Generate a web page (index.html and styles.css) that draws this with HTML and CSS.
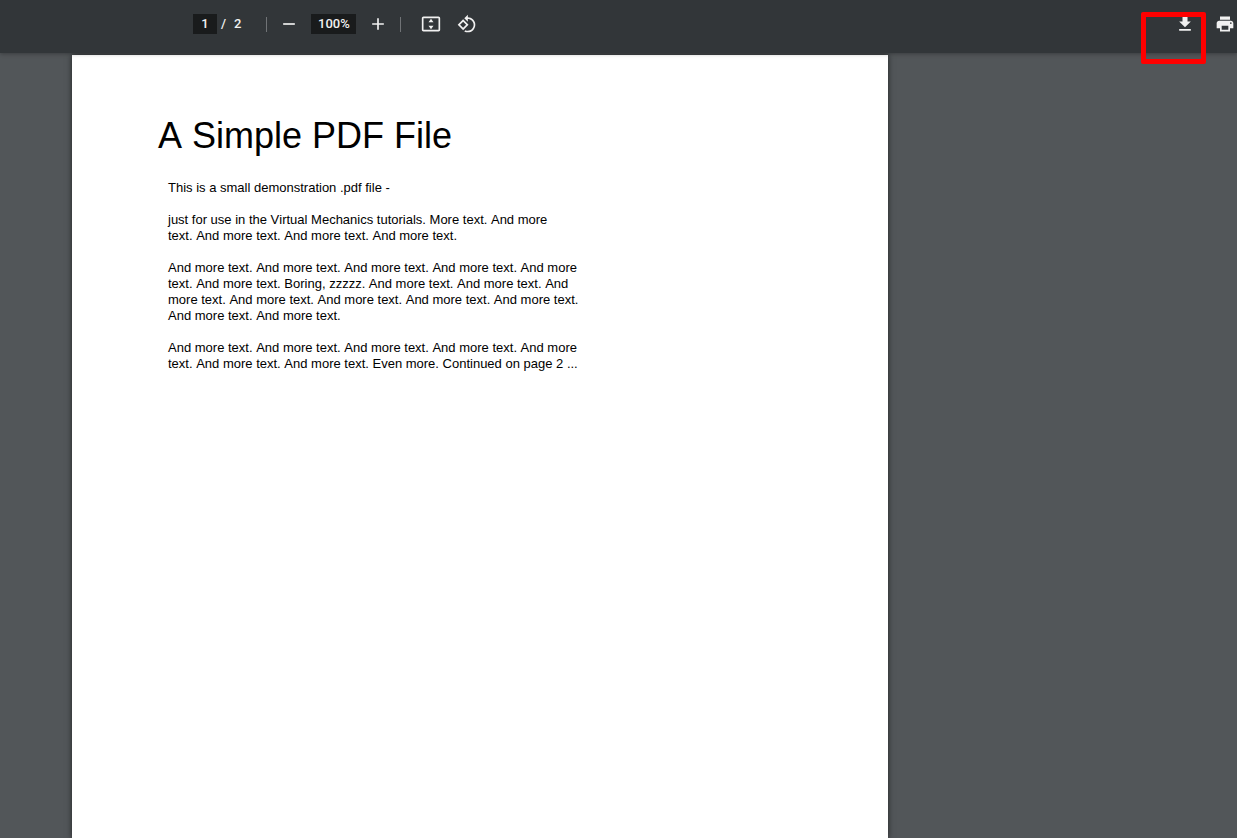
FILE: index.html
```html
<!DOCTYPE html>
<html lang="en">
<head>
<meta charset="utf-8">
<title>A Simple PDF File</title>
<link rel="stylesheet" href="styles.css">
</head>
<body>
<header class="toolbar">
  <div class="controls">
    <div class="pages">
      <input class="field page-number" type="text" value="1" aria-label="Page number">
      <span>/</span>
      <span class="page-count">2</span>
    </div>
    <span class="divider"></span>
    <div class="zoom">
      <button class="icon-button" type="button" aria-label="Zoom out">
        <svg viewBox="0 0 24 24"><path d="M19 13H5v-2h14z"/></svg>
      </button>
      <input class="field zoom-level" type="text" value="100%" aria-label="Zoom level">
      <button class="icon-button" type="button" aria-label="Zoom in">
        <svg viewBox="0 0 24 24"><path d="M19 13h-6v6h-2v-6H5v-2h6V5h2v6h6z"/></svg>
      </button>
    </div>
    <span class="divider"></span>
    <div class="view">
      <button class="icon-button" type="button" aria-label="Fit to page">
        <svg viewBox="0 0 24 24"><path d="M21 3H3c-1.100 0-2 .9-2 2v14c0 1.100.9 2 2 2h18c1.100 0 2-.9 2-2V5c0-1.100-.9-2-2-2zm0 16H3V5h18zM12 5.800 9 10h6zm0 12.400L15 14H9z"/></svg>
      </button>
      <button class="icon-button" type="button" aria-label="Rotate counterclockwise">
        <svg viewBox="0 0 24 24"><path d="M7.340 6.410.86 12.900l6.490 6.480 6.490-6.480-6.500-6.490zM3.690 12.900l3.660-3.660L11 12.900l-3.660 3.660-3.650-3.660zm15.670-6.260C17.610 4.880 15.300 4 13 4V.76L8.760 5 13 9.240V6c1.790 0 3.580.68 4.950 2.050 2.730 2.730 2.730 7.170 0 9.900C16.580 19.320 14.790 20 13 20c-.97 0-1.940-.21-2.840-.61l-1.490 1.490C10.020 21.620 11.510 22 13 22c2.300 0 4.610-.88 6.360-2.640 3.520-3.510 3.520-9.210 0-12.720z"/></svg>
      </button>
    </div>
  </div>
  <div class="actions">
    <div class="highlighted">
      <button class="icon-button" type="button" aria-label="Download">
        <svg viewBox="0 0 24 24"><path d="M19 9h-4V3H9v6H5l7 7zM5 18v2h14v-2z"/></svg>
      </button>
      <span class="highlight"></span>
    </div>
    <button class="icon-button" type="button" aria-label="Print">
      <svg viewBox="0 0 24 24"><path d="M19 8H5c-1.660 0-3 1.340-3 3v6h4v4h12v-4h4v-6c0-1.660-1.340-3-3-3zm-3 11H8v-5h8zm3-7c-.55 0-1-.45-1-1s.45-1 1-1 1 .45 1 1-.45 1-1 1zM18 3H6v4h12z"/></svg>
    </button>
  </div>
</header>
<main class="viewer">
  <article class="sheet">
    <h1 class="title">A Simple PDF File</h1>
    <div class="text">
      <p>This is a small demonstration .pdf file -</p>
      <p>just for use in the Virtual Mechanics tutorials. More text. And more<br>text. And more text. And more text. And more text.</p>
      <p>And more text. And more text. And more text. And more text. And more<br>text. And more text. Boring, zzzzz. And more text. And more text. And<br>more text. And more text. And more text. And more text. And more text.<br>And more text. And more text.</p>
      <p>And more text. And more text. And more text. And more text. And more<br>text. And more text. And more text. Even more. Continued on page 2 ...</p>
    </div>
  </article>
</main>
</body>
</html>
```
FILE: styles.css
```css
* {
  box-sizing: border-box;
}

body {
  display: flex;
  flex-direction: column;
  min-height: 100vh;
  margin: 0;
  background: #525659;
  font-family: "Liberation Sans", Arial, sans-serif;
}

.toolbar {
  position: relative;
  z-index: 1;
  display: flex;
  justify-content: space-between;
  padding: 14px 2px 19px 193px;
  background: #323639;
  box-shadow: 0 1px 4px rgba(0, 0, 0, 0.3);
  color: #f1f1f1;
  font: 500 13px/20px Roboto, sans-serif;
}

.controls,
.pages,
.zoom,
.view,
.actions {
  display: flex;
  align-items: center;
}

.pages {
  gap: 4px;
}

.page-count {
  margin-left: 4px;
}

.field {
  height: 20px;
  padding: 0;
  border: 0;
  background: #191b1c;
  color: inherit;
  font: inherit;
  text-align: center;
}

.page-number {
  width: 24px;
}

.zoom-level {
  width: 45px;
}

.divider {
  width: 1px;
  height: 15px;
  background: #707376;
}

.pages + .divider {
  margin-left: 25px;
}

.zoom {
  gap: 12px;
  margin: 0 12px;
}

.view {
  gap: 16px;
  margin-left: 20px;
}

.actions {
  gap: 20px;
}

.icon-button {
  display: block;
  width: 20px;
  height: 20px;
  padding: 0;
  border: 0;
  background: none;
  color: inherit;
}

.icon-button svg {
  display: block;
  width: 20px;
  height: 20px;
  fill: currentColor;
}

.highlighted {
  position: relative;
}

.highlight {
  position: absolute;
  top: -2px;
  right: -11px;
  width: 65px;
  height: 52px;
  border: 5px solid #ff0000;
  border-radius: 2px;
  pointer-events: none;
}

.viewer {
  display: flex;
  flex: 1;
  padding: 2px 72px 0;
}

.sheet {
  width: 100%;
  max-width: 816px;
  padding: 61px 86px;
  background: #ffffff;
  box-shadow: 0 0 6px rgba(0, 0, 0, 0.6);
  color: #000000;
  font-kerning: none;
}

.title {
  margin: 0 0 24px;
  font-size: 36px;
  font-weight: 400;
  line-height: 40px;
}

.text {
  padding-left: 10px;
  font-size: 13px;
  line-height: 16px;
}

.text p {
  margin: 0 0 16px;
}
```
